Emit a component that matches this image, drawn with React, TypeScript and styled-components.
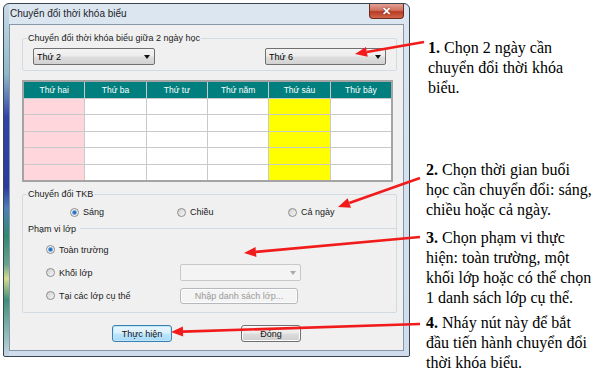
import styled, { createGlobalStyle } from 'styled-components';

const GlobalStyle = createGlobalStyle`
  html, body {
    margin: 0;
    padding: 0;
    background: #fff;
  }
  body {
    width: 595px;
    height: 370px;
    overflow: hidden;
    font-family: 'Liberation Sans', Arial, sans-serif;
    color: #000;
  }
`;

const Page = styled.div`
  position: relative;
  width: 595px;
  height: 370px;
  box-sizing: border-box;
  padding: 3px 0 0 3px;
  display: flex;
  align-items: flex-start;
`;

const Window = styled.div`
  width: 407px;
  height: 354px;
  box-sizing: border-box;
  border: 1px solid #3b4550;
  border-radius: 6px 6px 2px 2px;
  padding: 0 5px 5px;
  display: flex;
  flex-direction: column;
  background:
    linear-gradient(
        to bottom,
        #c9dbe6 0%,
        #8fb8c8 20%,
        #3443a8 32%,
        #2b3a9e 52%,
        #4f7fb8 58%,
        #2f8a6e 66%,
        #6aa48e 74%,
        #d8dc90 78%,
        #3d8f78 84%,
        #c6d6e2 100%
      )
      left top / 5px 100% no-repeat,
    linear-gradient(to bottom, #dbe6f1 0%, #cfdceb 100%);
`;

const TitleBar = styled.div`
  height: 20px;
  display: flex;
  align-items: flex-start;
  padding-left: 1px;
`;

const TitleText = styled.span`
  font-size: 10px;
  line-height: 20px;
  color: #1e1e1e;
`;

const CloseButton = styled.div`
  margin-left: auto;
  width: 35px;
  height: 15px;
  box-sizing: border-box;
  border: 1px solid #6b2a22;
  border-top: none;
  border-radius: 0 0 4px 4px;
  background: linear-gradient(to bottom, #e4a093 0%, #d0705f 45%, #b83b24 55%, #d2674a 100%);
  display: flex;
  align-items: center;
  justify-content: center;
  color: #fff;
  font-size: 11px;
  font-weight: bold;
  line-height: 1;
  text-shadow: 0 0 2px #5a1a10;
`;

const Client = styled.div`
  width: 395px;
  height: 327px;
  box-sizing: border-box;
  border: 1px solid #8797a8;
  background: #f0f0f0;
  display: flex;
  flex-direction: column;
  font-size: 9px;
`;

const Group = styled.fieldset<{ $mt: number }>`
  margin: ${p => p.$mt}px 0 0 12px;
  padding: 0;
  width: 375px;
  min-width: 0;
  box-sizing: border-box;
  border: 1px solid #d3dbe2;
  border-radius: 2px;
`;

const Legend = styled.legend`
  margin-left: 4px;
  padding: 0 1px;
  font-size: 9px;
  line-height: 11px;
  color: #1a1a1a;
`;

const PickRow = styled.div`
  display: flex;
  justify-content: space-between;
  padding: 4px 10px 5px;
`;

const Combo = styled.div<{ $w: number; $disabled?: boolean }>`
  width: ${p => p.$w}px;
  height: 17px;
  box-sizing: border-box;
  border: 1px solid ${p => (p.$disabled ? '#c8c8c8' : '#707070')};
  border-radius: 2px;
  background: ${p =>
    p.$disabled
      ? '#f4f4f4'
      : 'linear-gradient(to bottom, #f4f4f4 0%, #ececec 48%, #dedede 52%, #d2d2d2 100%)'};
  display: flex;
  align-items: center;
  justify-content: space-between;
  padding: 0 4px 0 3px;
  font-size: 9px;
`;

const Caret = styled.span<{ $disabled?: boolean }>`
  width: 0;
  height: 0;
  border-left: 3.5px solid transparent;
  border-right: 3.5px solid transparent;
  border-top: 4px solid ${p => (p.$disabled ? '#a8a8a8' : '#111')};
`;

const Grid = styled.div`
  margin: 9px 0 0 12px;
  width: 371px;
  height: 102px;
  box-sizing: border-box;
  border: 2px solid #a4a4a4;
  background: #c9c9c9;
  display: grid;
  grid-template-columns: repeat(6, 1fr);
  grid-template-rows: 16px repeat(5, 1fr);
  gap: 1px;
`;

const HeadCell = styled.div`
  background: #007f7e;
  color: #fff;
  font-size: 8.5px;
  display: flex;
  align-items: center;
  justify-content: center;
`;

const tones = {
  pink: '#ffd6dc',
  yellow: '#ffff00',
  white: '#ffffff',
};

const Cell = styled.div<{ $tone: keyof typeof tones }>`
  background: ${p => tones[p.$tone]};
`;

const SessionRow = styled.div`
  display: grid;
  grid-template-columns: 107px 111px auto;
  padding-left: 47px;
  margin-top: 6px;
  height: 12px;
  align-items: center;
`;

const RadioLabel = styled.label`
  display: inline-flex;
  align-items: center;
  gap: 4px;
  font-size: 9px;
  color: #1a1a1a;
`;

const RadioDot = styled.span<{ $checked?: boolean }>`
  width: 9px;
  height: 9px;
  box-sizing: border-box;
  border-radius: 50%;
  border: 1px solid #8c8c8c;
  background: ${p =>
    p.$checked
      ? 'radial-gradient(circle, #1f5fa8 0, #3b86cf 1.6px, #a9cdef 2.4px, #f6f6f6 3px)'
      : 'linear-gradient(135deg, #cfcfcf 0%, #f8f8f8 100%)'};
`;

const SubHeader = styled.div`
  display: flex;
  align-items: center;
  margin-top: 5px;
  padding-left: 5px;
  height: 11px;
  color: #1a1a1a;

  &::after {
    content: '';
    flex: 1;
    height: 1px;
    margin-left: 4px;
    background: #d3dbe2;
  }
`;

const ScopeList = styled.div`
  display: flex;
  flex-direction: column;
  gap: 6px;
  margin-top: 7px;
  padding: 0 0 8px 23px;
`;

const ScopeRow = styled.div`
  display: grid;
  grid-template-columns: 134px auto;
  align-items: center;
  height: 17px;
`;

const Button = styled.div<{ $w: number; $kind?: 'default' | 'normal' | 'disabled'; $h?: number }>`
  width: ${p => p.$w}px;
  height: ${p => p.$h ?? 17}px;
  box-sizing: border-box;
  border-radius: 3px;
  border: 1px solid
    ${p => (p.$kind === 'default' ? '#3c7fb1' : p.$kind === 'disabled' ? '#b5b9bd' : '#707070')};
  background: ${p =>
    p.$kind === 'default'
      ? 'linear-gradient(to bottom, #eaf6fd 0%, #d9f0fc 48%, #bee6fd 52%, #a7d9f5 100%)'
      : p.$kind === 'disabled'
      ? '#f4f4f4'
      : 'linear-gradient(to bottom, #f2f2f2 0%, #ebebeb 48%, #dddddd 52%, #cfcfcf 100%)'};
  box-shadow: ${p => (p.$kind === 'default' ? 'inset 0 0 0 1px #bfe7fb' : 'inset 0 0 0 1px #fcfcfc')};
  color: ${p => (p.$kind === 'disabled' ? '#9a9a9a' : '#111')};
  font-size: 9px;
  display: flex;
  align-items: center;
  justify-content: center;
`;

const ButtonRow = styled.div`
  display: flex;
  gap: 69px;
  margin-top: 12px;
  padding-left: 102px;
`;

const Notes = styled.div`
  display: flex;
  flex-direction: column;
  padding-left: 16px;
  font-family: 'Liberation Serif', 'Times New Roman', serif;
  font-size: 16px;
  line-height: 20px;
  white-space: nowrap;
`;

const Note = styled.p<{ $mt: number; $ml?: number }>`
  margin: ${p => p.$mt}px 0 0 ${p => p.$ml ?? 0}px;
`;

const Overlay = styled.svg`
  position: absolute;
  left: 0;
  top: 0;
  pointer-events: none;
`;

type ArrowProps = { x1: number; y1: number; x2: number; y2: number };

function Arrow({ x1, y1, x2, y2 }: ArrowProps) {
  const len = Math.hypot(x2 - x1, y2 - y1);
  const dx = (x2 - x1) / len;
  const dy = (y2 - y1) / len;
  const bx = x2 - dx * 12;
  const by = y2 - dy * 12;
  const nx = -dy * 5;
  const ny = dx * 5;
  return (
    <g>
      <line x1={x1} y1={y1} x2={bx} y2={by} stroke="#f21b1b" strokeWidth={2.6} />
      <polygon
        points={`${x2},${y2} ${bx + nx},${by + ny} ${bx - nx},${by - ny}`}
        fill="#f21b1b"
      />
    </g>
  );
}

const days = ['Thứ hai', 'Thứ ba', 'Thứ tư', 'Thứ năm', 'Thứ sáu', 'Thứ bảy'];

function toneFor(col: number): keyof typeof tones {
  if (col === 0) return 'pink';
  if (col === 4) return 'yellow';
  return 'white';
}

export default function App() {
  return (
    <Page>
      <GlobalStyle />
      <Window>
        <TitleBar>
          <TitleText>Chuyển đổi thời khóa biểu</TitleText>
          <CloseButton>✕</CloseButton>
        </TitleBar>
        <Client>
          <Group $mt={8}>
            <Legend>Chuyển đổi thời khóa biểu giữa 2 ngày học</Legend>
            <PickRow>
              <Combo $w={122}>
                <span>Thứ 2</span>
                <Caret />
              </Combo>
              <Combo $w={121}>
                <span>Thứ 6</span>
                <Caret />
              </Combo>
            </PickRow>
          </Group>

          <Grid>
            {days.map(d => (
              <HeadCell key={d}>{d}</HeadCell>
            ))}
            {Array.from({ length: 30 }, (_, i) => (
              <Cell key={i} $tone={toneFor(i % 6)} />
            ))}
          </Grid>

          <Group $mt={7}>
            <Legend>Chuyển đổi TKB</Legend>
            <SessionRow>
              <RadioLabel>
                <RadioDot $checked />
                Sáng
              </RadioLabel>
              <RadioLabel>
                <RadioDot />
                Chiều
              </RadioLabel>
              <RadioLabel>
                <RadioDot />
                Cả ngày
              </RadioLabel>
            </SessionRow>
            <SubHeader>Phạm vi lớp</SubHeader>
            <ScopeList>
              <ScopeRow>
                <RadioLabel>
                  <RadioDot $checked />
                  Toàn trường
                </RadioLabel>
              </ScopeRow>
              <ScopeRow>
                <RadioLabel>
                  <RadioDot />
                  Khối lớp
                </RadioLabel>
                <Combo $w={121} $disabled>
                  <span />
                  <Caret $disabled />
                </Combo>
              </ScopeRow>
              <ScopeRow>
                <RadioLabel>
                  <RadioDot />
                  Tại các lớp cụ thể
                </RadioLabel>
                <Button $w={118} $h={16} $kind="disabled">
                  Nhập danh sách lớp...
                </Button>
              </ScopeRow>
            </ScopeList>
          </Group>

          <ButtonRow>
            <Button $w={60} $kind="default">
              Thực hiện
            </Button>
            <Button $w={60}>Đóng</Button>
          </ButtonRow>
        </Client>
      </Window>

      <Notes>
        <Note $mt={35} $ml={2}>
          <b>1.</b> Chọn 2 ngày cần
          <br />
          chuyển đổi thời khóa
          <br />
          biểu.
        </Note>
        <Note $mt={62}>
          <b>2.</b> Chọn thời gian buổi
          <br />
          học cần chuyển đổi: sáng,
          <br />
          chiều hoặc cả ngày.
        </Note>
        <Note $mt={8}>
          <b>3.</b> Chọn phạm vi thực
          <br />
          hiện: toàn trường, một
          <br />
          khối lớp hoặc có thể chọn
          <br />1 danh sách lớp cụ thể.
        </Note>
        <Note $mt={5}>
          <b>4.</b> Nháy nút này để bắt
          <br />
          đầu tiến hành chuyển đổi
          <br />
          thời khóa biểu.
        </Note>
      </Notes>

      <Overlay width={595} height={370} viewBox="0 0 595 370">
        <Arrow x1={424} y1={42} x2={355} y2={54} />
        <Arrow x1={420} y1={178} x2={338} y2={207} />
        <Arrow x1={420} y1={237} x2={244} y2={253} />
        <Arrow x1={420} y1={324} x2={171} y2={332} />
      </Overlay>
    </Page>
  );
}
